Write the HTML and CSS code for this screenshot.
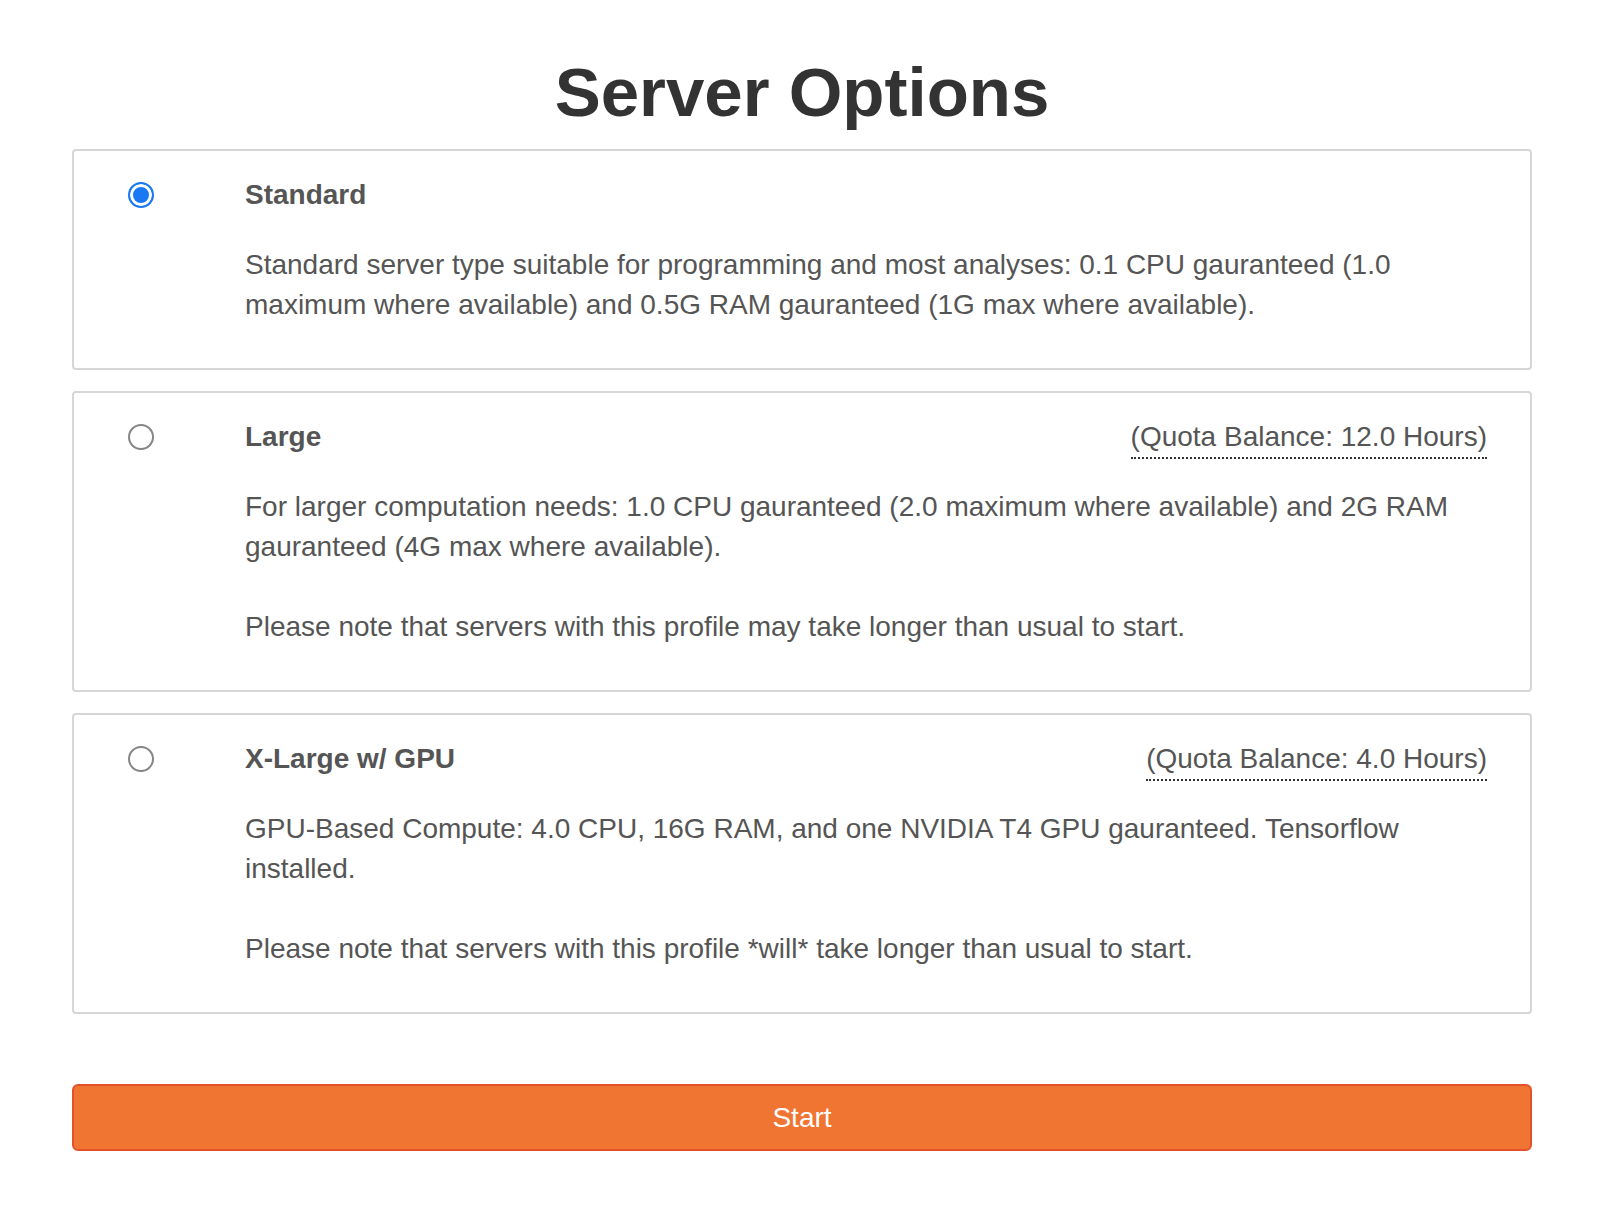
FILE: index.html
```html
<!DOCTYPE html>
<html lang="en">
<head>
<meta charset="utf-8">
<title>Server Options</title>
<link rel="stylesheet" href="styles.css">
</head>
<body>
<div class="page">
  <h1 class="page-title">Server Options</h1>
  <form class="profile-form">
    <label class="profile">
      <span class="radio-cell"><input type="radio" name="profile" class="radio" checked></span>
      <span class="profile-body">
        <span class="profile-head">
          <span class="profile-name">Standard</span>
        </span>
        <span class="profile-desc">Standard server type suitable for programming and most analyses: 0.1 CPU gauranteed (1.0 maximum where available) and 0.5G RAM gauranteed (1G max where available).</span>
      </span>
    </label>
    <label class="profile">
      <span class="radio-cell"><input type="radio" name="profile" class="radio"></span>
      <span class="profile-body">
        <span class="profile-head">
          <span class="profile-name">Large</span>
          <span class="quota-wrap"><abbr class="quota" title="Remaining quota">(Quota Balance: 12.0 Hours)</abbr></span>
        </span>
        <span class="profile-desc">For larger computation needs: 1.0 CPU gauranteed (2.0 maximum where available) and 2G RAM gauranteed (4G max where available).</span>
        <span class="profile-note">Please note that servers with this profile may take longer than usual to start.</span>
      </span>
    </label>
    <label class="profile">
      <span class="radio-cell"><input type="radio" name="profile" class="radio"></span>
      <span class="profile-body">
        <span class="profile-head">
          <span class="profile-name">X-Large w/ GPU</span>
          <span class="quota-wrap"><abbr class="quota" title="Remaining quota">(Quota Balance: 4.0 Hours)</abbr></span>
        </span>
        <span class="profile-desc">GPU-Based Compute: 4.0 CPU, 16G RAM, and one NVIDIA T4 GPU gauranteed. Tensorflow installed.</span>
        <span class="profile-note">Please note that servers with this profile *will* take longer than usual to start.</span>
      </span>
    </label>
    <button type="button" class="start-btn">Start</button>
  </form>
</div>
</body>
</html>
```
FILE: styles.css
```css
html, body {
  margin: 0;
  padding: 0;
  background: #ffffff;
}
body {
  font-family: "Liberation Sans", Arial, Helvetica, sans-serif;
  font-size: 28px;
  line-height: 40px;
  color: #555555;
}
.page {
  padding: 0 68px 0 72px;
}
.page-title {
  margin: 55px 0 18px;
  font-size: 69px;
  line-height: 76px;
  font-weight: bold;
  color: #333333;
  text-align: center;
}
.profile-form {
  display: flex;
  flex-direction: column;
}
.profile {
  display: flex;
  align-items: flex-start;
  border: 2px solid #d6d6d6;
  border-radius: 4px;
  padding: 24px 43px 43px 54px;
  margin-bottom: 21px;
  cursor: pointer;
}
.radio-cell {
  flex: 0 0 26px;
  width: 26px;
  height: 40px;
  display: flex;
  align-items: center;
  margin-right: 91px;
}
.radio {
  appearance: none;
  -webkit-appearance: none;
  width: 26px;
  height: 26px;
  margin: 0;
  border-radius: 50%;
  border: 2px solid #858585;
  background: #ffffff;
  box-sizing: border-box;
}
.radio:checked {
  border: 2px solid #1a78f3;
  background: #1a78f3;
  box-shadow: inset 0 0 0 3px #ffffff;
}
.profile-body {
  flex: 1;
  display: flex;
  flex-direction: column;
}
.profile-head {
  display: flex;
  justify-content: space-between;
  height: 40px;
}
.profile-name {
  font-weight: bold;
  color: #555555;
}
.quota-wrap {
  display: block;
}
.quota {
  text-decoration: none;
  padding-bottom: 5px;
  border-bottom: 2px dotted #333333;
  color: #555555;
}
.profile-desc {
  margin-top: 30px;
}
.profile-note {
  margin-top: 40px;
}
.start-btn {
  margin-top: 49px;
  height: 67px;
  border: 2px solid #e2532b;
  border-radius: 6px;
  background: #f07532;
  color: #ffffff;
  font-family: "Liberation Sans", Arial, Helvetica, sans-serif;
  font-size: 28px;
  line-height: 40px;
  cursor: pointer;
}
```
